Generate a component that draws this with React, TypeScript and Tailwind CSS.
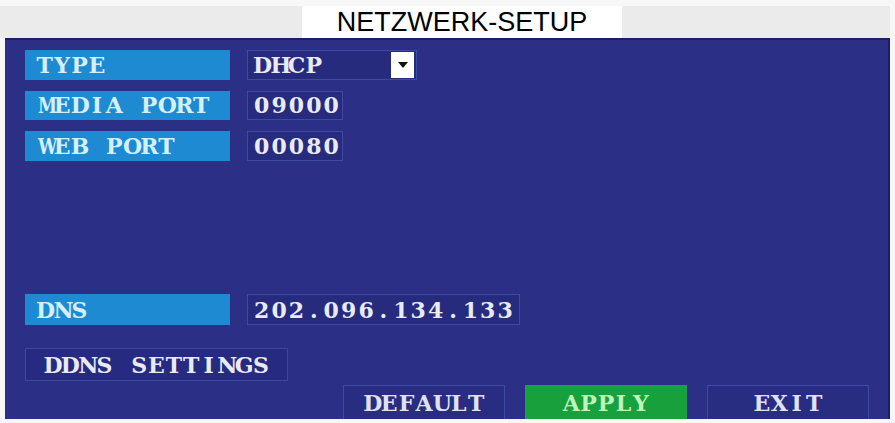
const OSD_FONT = "font-['DejaVu_Serif',serif] font-bold";

// fixed-width cells so the serif text reads like the DVR's monospaced OSD font
function Mono({ text, className = "" }: { text: string; className?: string }) {
  return (
    <span className={`flex ${className}`}>
      {text.split("").map((ch, i) => (
        <span
          key={i}
          className={`inline-block w-[17.4px] text-center whitespace-pre ${
            ch === "M" || ch === "W" ? "scale-x-[0.78]" : ""
          }`}
        >
          {ch}
        </span>
      ))}
    </span>
  );
}

function Label({ text }: { text: string }) {
  return (
    <div className="flex h-full w-[205px] items-center bg-[#1e8ad2] pl-[11px] text-[#d4f0ff]">
      <Mono text={text} />
    </div>
  );
}

function Value({ text, width, dropdown }: { text: string; width: string; dropdown?: boolean }) {
  return (
    <div
      className={`flex h-full items-center justify-between border border-[#3d4ca2] bg-[#262b7e] pl-[5px] pr-[2px] text-[#e8eaf6] ${width}`}
    >
      <Mono text={text} />
      {dropdown && (
        <div className="flex h-[26px] w-[23px] items-center justify-center bg-white">
          <svg width="10" height="6" viewBox="0 0 10 6">
            <path d="M0 0h10L5 6z" fill="#111" />
          </svg>
        </div>
      )}
    </div>
  );
}

function Button({ text, green }: { text: string; green?: boolean }) {
  return (
    <div
      className={`flex h-[34px] w-[162px] items-center justify-center border border-b-0 ${
        green
          ? "border-[#1aa43e] bg-[#18a03c] text-[#bff5b8]"
          : "border-[#3d4ca2] bg-[#282d82] text-[#e0e2f2]"
      }`}
    >
      <Mono text={text} />
    </div>
  );
}

export default function App() {
  return (
    <div className={`h-[423px] w-[895px] overflow-hidden bg-[#f7f7f7] text-[22px] leading-none ${OSD_FONT}`}>
      {/* title strip */}
      <div className="mt-[6px] flex h-[32px] w-[890px] bg-[#ebebeb] pl-[302px]">
        <div className="flex w-[320px] items-center justify-center bg-white font-['Liberation_Sans',sans-serif] text-[27px] font-normal text-black">
          NETZWERK-SETUP
        </div>
      </div>

      {/* blue OSD panel */}
      <div className="ml-[5px] flex h-[381px] w-[885px] flex-col overflow-hidden border-t-2 border-r-2 border-[#1b1f66] bg-[#2b2f86] pl-[20px] pt-[10px]">
        <div className="flex h-[30px] gap-[17px]">
          <Label text="TYPE" />
          <Value text="DHCP" width="w-[170px]" dropdown />
        </div>
        <div className="mt-[11px] flex h-[30px] gap-[17px]">
          <Label text="MEDIA PORT" />
          <Value text="09000" width="w-[96px]" />
        </div>
        <div className="mt-[11px] flex h-[30px] gap-[17px]">
          <Label text="WEB PORT" />
          <Value text="00080" width="w-[96px]" />
        </div>

        <div className="mt-[133px] flex h-[32px] gap-[17px]">
          <Label text="DNS" />
          <Value text="202.096.134.133" width="w-[273px]" />
        </div>

        <div className="mt-[23px] flex h-[33px] w-[263px] items-center justify-center border border-[#3a49a0] bg-[#262a80] text-[#eaeaf4]">
          <Mono text="DDNS SETTINGS" />
        </div>

        <div className="mt-[4px] flex gap-[20px] pl-[318px]">
          <Button text="DEFAULT" />
          <Button text="APPLY" green />
          <Button text="EXIT" />
        </div>
      </div>
    </div>
  );
}
